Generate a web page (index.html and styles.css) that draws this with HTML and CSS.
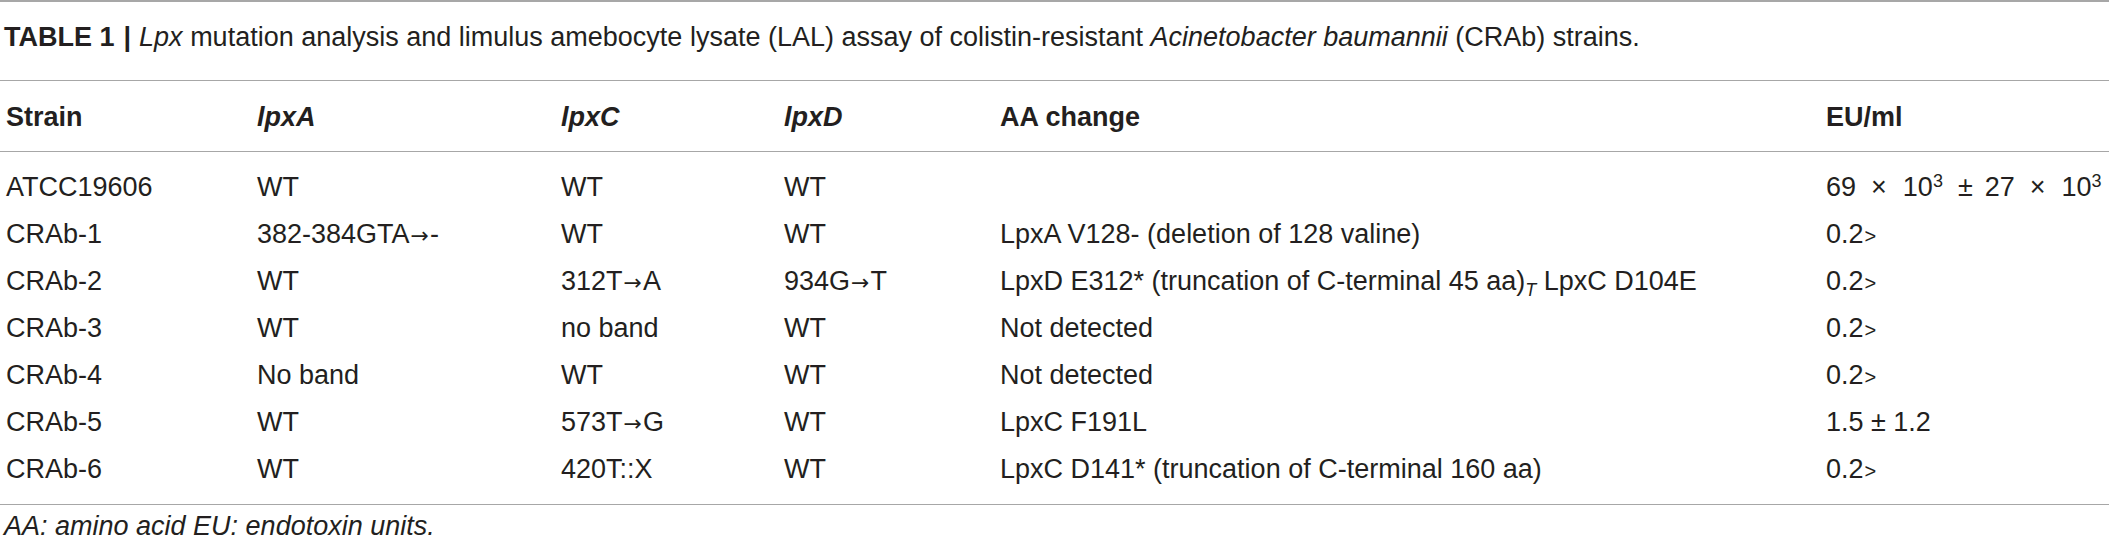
FILE: index.html
```html
<!DOCTYPE html>
<html>
<head>
<meta charset="utf-8">
<link rel="stylesheet" href="styles.css">
</head>
<body>
<div class="frame">
  <div class="caption"><b>TABLE 1</b><span class="bar">|</span><i>Lpx</i> mutation analysis and limulus amebocyte lysate (LAL) assay of colistin-resistant <i>Acinetobacter baumannii</i> (CRAb) strains.</div>
  <table class="data">
    <colgroup>
      <col class="c1"><col class="c2"><col class="c3"><col class="c4"><col class="c5"><col class="c6">
    </colgroup>
    <thead>
      <tr><th>Strain</th><th><i>lpxA</i></th><th><i>lpxC</i></th><th><i>lpxD</i></th><th>AA change</th><th>EU/ml</th></tr>
    </thead>
    <tbody>
      <tr class="first"><td>ATCC19606</td><td>WT</td><td>WT</td><td>WT</td><td></td><td>69<span class="x">×</span>10<sup>3</sup><span class="pm">±</span>27<span class="x">×</span>10<sup>3</sup></td></tr>
      <tr><td>CRAb-1</td><td>382-384GTA<span class="arr">→</span>-</td><td>WT</td><td>WT</td><td>LpxA V128- (deletion of 128 valine)</td><td>0.2<span class="gt">&gt;</span></td></tr>
      <tr><td>CRAb-2</td><td>WT</td><td>312T<span class="arr">→</span>A</td><td>934G<span class="arr">→</span>T</td><td>LpxD E312* (truncation of C-terminal 45 aa)<sub><i>T</i></sub> LpxC D104E</td><td>0.2<span class="gt">&gt;</span></td></tr>
      <tr><td>CRAb-3</td><td>WT</td><td>no band</td><td>WT</td><td>Not detected</td><td>0.2<span class="gt">&gt;</span></td></tr>
      <tr><td>CRAb-4</td><td>No band</td><td>WT</td><td>WT</td><td>Not detected</td><td>0.2<span class="gt">&gt;</span></td></tr>
      <tr><td>CRAb-5</td><td>WT</td><td>573T<span class="arr">→</span>G</td><td>WT</td><td>LpxC F191L</td><td>1.5 ± 1.2</td></tr>
      <tr class="last"><td>CRAb-6</td><td>WT</td><td>420T::X</td><td>WT</td><td>LpxC D141* (truncation of C-terminal 160 aa)</td><td>0.2<span class="gt">&gt;</span></td></tr>
    </tbody>
  </table>
  <div class="foot"><i>AA: amino acid EU: endotoxin units.</i></div>
</div>
</body>
</html>
```
FILE: styles.css
```css
html, body {
  margin: 0;
  padding: 0;
  background: #ffffff;
}
body {
  font-family: "Liberation Sans", Arial, sans-serif;
  font-size: 27px;
  line-height: 31px;
  color: #231f20;
  overflow: hidden;
}
.frame {
  width: 2109px;
  border-top: 2px solid #a7a7a7;
}
.caption {
  padding: 20px 0 27px 4px;
  white-space: nowrap;
}
.caption .bar {
  font-weight: bold;
  margin: 0 8px 0 9px;
}
.data {
  width: 2109px;
  border-collapse: collapse;
  table-layout: fixed;
  border-top: 1px solid #a7a7a7;
  border-bottom: 1px solid #a7a7a7;
}
.c1 { width: 251px; }
.c2 { width: 304px; }
.c3 { width: 223px; }
.c4 { width: 216px; }
.c5 { width: 826px; }
.c6 { width: 289px; }
.data th, .data td {
  text-align: left;
  white-space: nowrap;
  padding: 8px 0 8px 6px;
  vertical-align: top;
  height: 31px;
  box-sizing: content-box;
}
.data th {
  font-weight: bold;
  padding-top: 21px;
  padding-bottom: 18px;
  border-bottom: 1px solid #a7a7a7;
}
.data tr.first td { padding-top: 20px; }
.data tr.last td { padding-bottom: 19px; }
sup {
  font-size: 18px;
  line-height: 0;
  vertical-align: 9px;
}
sub {
  font-size: 18px;
  line-height: 0;
  vertical-align: -6px;
}
.arr {
  font-family: "DejaVu Sans", sans-serif;
  font-size: 22px;
  line-height: 0;
  margin: 0 1px;
}
.x {
  margin: 0 16px 0 15px;
}
.pm {
  margin: 0 12px 0 15px;
}
.gt {
  font-size: 20px;
  line-height: 0;
  margin-left: 1px;
}
.foot {
  padding: 6px 0 0 4px;
  white-space: nowrap;
}
```
